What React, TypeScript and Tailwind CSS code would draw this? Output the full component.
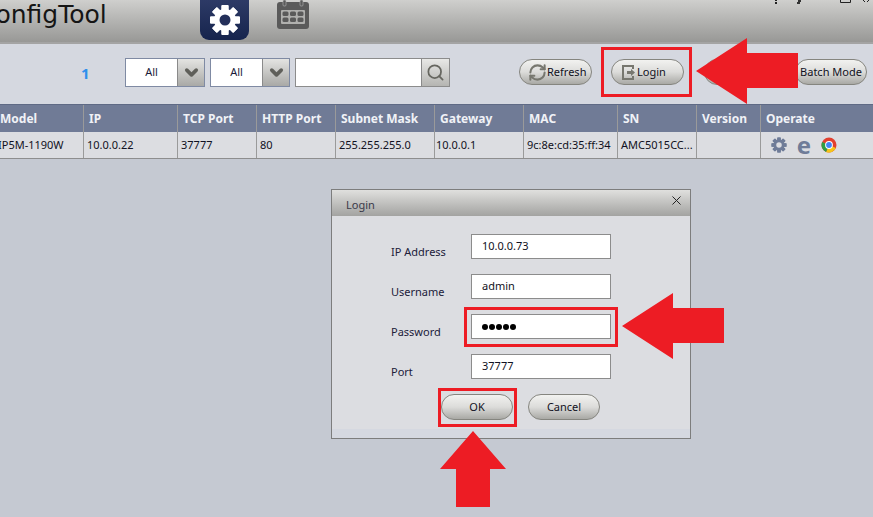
import { Search, ChevronDown, RefreshCw, X } from "lucide-react";

const columns = [
  { head: "Model", cell: "IP5M-1190W", w: "w-[84px]", hp: "pl-[0px]", cp: "pl-0 indent-[-2px]" },
  { head: "IP", cell: "10.0.0.22", w: "w-[94px]", hp: "pl-[5px]", cp: "pl-[3px]" },
  { head: "TCP Port", cell: "37777", w: "w-[79px]", hp: "pl-[5px]", cp: "pl-[3px]" },
  { head: "HTTP Port", cell: "80", w: "w-[79px]", hp: "pl-[5px]", cp: "pl-[3px]" },
  { head: "Subnet Mask", cell: "255.255.255.0", w: "w-[99px]", hp: "pl-[5px]", cp: "pl-[3px]" },
  { head: "Gateway", cell: "10.0.0.1", w: "w-[89px]", hp: "pl-[5px]", cp: "pl-[1px]" },
  { head: "MAC", cell: "9c:8e:cd:35:ff:34", w: "w-[94px]", hp: "pl-[5px]", cp: "pl-[3px]" },
  { head: "SN", cell: "AMC5015CC...", w: "w-[79px]", hp: "pl-[5px]", cp: "pl-[3px]" },
  { head: "Version", cell: "", w: "w-[64px]", hp: "pl-[5px]", cp: "pl-[3px]" },
];

function Gear({ size, color, hole }: { size: number; color: string; hole: string }) {
  const teeth = [0, 45, 90, 135, 180, 225, 270, 315];
  return (
    <svg width={size} height={size} viewBox="0 0 32 32">
      {teeth.map((a) => (
        <rect key={a} x="12.5" y="1" width="7" height="30" rx="1" fill={color} transform={`rotate(${a} 16 16)`} />
      ))}
      <circle cx="16" cy="16" r="11" fill={color} />
      <circle cx="16" cy="16" r="5.5" fill={hole} />
    </svg>
  );
}

function Combo({ label }: { label: string }) {
  return (
    <div className="flex h-[29px] w-[80px] border border-[#7f8aa3] bg-white">
      <div className="flex flex-1 items-center justify-center text-[11px] text-[#1a1a3a]">{label}</div>
      <div className="flex w-[27px] items-center justify-center border-l border-[#8a8a8a] bg-gradient-to-b from-[#e4e4e2] to-[#a9a9a6]">
        <ChevronDown size={19} strokeWidth={4.5} color="#5f5f5a" />
      </div>
    </div>
  );
}

function Pill({ children, className }: { children: React.ReactNode; className: string }) {
  return (
    <div
      className={`flex h-[26px] items-center rounded-[13px] border border-[#85857f] bg-gradient-to-b from-[#f2f2f0] via-[#dcdcda] to-[#a9a9a5] text-[11px] text-[#111122] ${className}`}
    >
      {children}
    </div>
  );
}

function Field({ label, value, dots }: { label: string; value: string; dots?: boolean }) {
  return (
    <div className="flex h-[25px] items-start">
      <div className="w-[80px] pt-[10px] text-[11px] leading-[16px] text-[#20203a]">{label}</div>
      <div className="flex h-[25px] w-[140px] items-center border border-[#8c8c8c] bg-white pl-[10px] text-[11px] text-[#111122]">
        {dots ? (
          <div className="flex gap-[1px]">
            {[0, 1, 2, 3, 4].map((i) => (
              <span key={i} className="h-[6px] w-[6px] rounded-full bg-black" />
            ))}
          </div>
        ) : (
          value
        )}
      </div>
    </div>
  );
}

function RedArrow({ className, dir }: { className: string; dir: "left" | "up" }) {
  if (dir === "left") {
    return (
      <svg className={`absolute ${className}`} width="102" height="66" viewBox="0 0 102 66">
        <polygon points="0,33 51,0 51,15 102,15 102,50 51,50 51,66" fill="#ed1c24" />
      </svg>
    );
  }
  return (
    <svg className={`absolute ${className}`} width="66" height="76" viewBox="0 0 66 76">
      <polygon points="33,0 66,38 50,38 50,76 16,76 16,38 0,38" fill="#ed1c24" />
    </svg>
  );
}

export default function App() {
  return (
    <div
      className="relative flex h-[517px] w-[873px] flex-col overflow-hidden bg-[#c5c9d2]"
      style={{ fontFamily: '"Noto Sans", "DejaVu Sans", sans-serif' }}
    >
      {/* title bar */}
      <div className="relative flex h-[44px] items-start border-b-2 border-[#a4a4a4] bg-gradient-to-b from-[#cfcfcd] to-[#989896]">
        <div
          className="ml-[-22px] mt-[-1px] w-[168px] whitespace-nowrap text-[25px] leading-[32px] text-[#151515]"
          style={{ fontFamily: '"DejaVu Sans", sans-serif' }}
        >
          ConfigTool
        </div>
        <div className="ml-[54px] flex h-[40px] w-[49px] items-center justify-center rounded-b-[9px] bg-gradient-to-b from-[#2d3a66] to-[#16244d]">
          <Gear size={32} color="#ffffff" hole="#24305a" />
        </div>
        <svg className="ml-[27px]" width="34" height="30" viewBox="0 0 34 30">
          <rect x="1" y="2" width="32" height="27" rx="3" fill="#5a5a5a" />
          <rect x="7" y="0" width="3" height="6" rx="1" fill="#5a5a5a" stroke="#b5b5b5" strokeWidth="0.6" />
          <rect x="24" y="0" width="3" height="6" rx="1" fill="#5a5a5a" stroke="#b5b5b5" strokeWidth="0.6" />
          <rect x="5" y="10" width="24" height="14" rx="1" fill="#b0b0ae" />
          {[0, 1, 2].map((c) =>
            [0, 1].map((r) => (
              <rect key={`${c}-${r}`} x={6.5 + c * 7.5} y={11.5 + r * 6} width="6" height="4.5" rx="1.5" fill="#5a5a5a" />
            )),
          )}
        </svg>
        {/* window controls, cropped by the top edge */}
        <svg className="absolute left-[760px] top-0" width="113" height="6" viewBox="0 0 113 6">
          <rect x="15" y="0" width="2" height="1" fill="#222222" />
          <rect x="15" y="2" width="2" height="2" fill="#222222" />
          <path d="M38 0h3v2h-1v2h-3v-2h1z" fill="#333333" />
          <path d="M80.5 0v2.5h10V0" fill="none" stroke="#222222" />
          <path d="M103 0l2 2M109 0l-2 2" stroke="#222222" />
        </svg>
      </div>

      {/* toolbar */}
      <div className="flex h-[60px] items-start bg-[#d5d8e0]">
        <div className="ml-[81px] mt-[19px] w-[44px] text-[15px] font-bold leading-[20px] text-[#2e8fec]">1</div>
        <div className="mt-[14px] flex gap-[5px]">
          <Combo label="All" />
          <Combo label="All" />
          <div className="flex h-[29px] w-[155px] border border-[#8c8c8c] bg-white">
            <div className="flex-1" />
            <div className="flex w-[28px] items-center justify-center border-l border-[#8a8a8a] bg-gradient-to-b from-[#e8e8e6] to-[#b5b5b2]">
              <Search size={19} strokeWidth={2.2} color="#66665f" />
            </div>
          </div>
        </div>
        <Pill className="ml-[69px] mt-[15px] w-[73px] pl-[8px]">
          <RefreshCw size={19} strokeWidth={2.6} color="#77776f" />
          <span>Refresh</span>
        </Pill>
        <Pill className="ml-[19px] mt-[15px] w-[73px] pl-[9px]">
          <svg width="16" height="17" viewBox="0 0 16 17" fill="none" stroke="#77776f" strokeWidth="2">
            <path d="M12 5V2H2v13h10v-3" />
            <path d="M6 8.5h6" strokeWidth="3" />
            <path d="M10 5l4 3.5-4 3.5z" fill="#77776f" strokeWidth="0" />
          </svg>
          <span>Login</span>
        </Pill>
        <Pill className="ml-[20px] mt-[15px] w-[30px]">
          <span />
        </Pill>
        <Pill className="ml-[61px] mt-[15px] w-[72px] shrink-0 justify-center whitespace-nowrap">Batch Mode</Pill>
      </div>

      {/* device table */}
      <div className="flex h-[28px] border-t border-[#5f6a85] bg-[#707b96]">
        {columns.map((c) => (
          <div
            key={c.head}
            className={`flex shrink-0 items-center border-r border-[#9a9a9a] text-[12px] font-bold text-[#f0f2f6] ${c.w} ${c.hp}`}
          >
            {c.head}
          </div>
        ))}
        <div className="flex flex-1 items-center pl-[5px] text-[12px] font-bold text-[#f0f2f6]">Operate</div>
      </div>
      <div className="flex h-[27px] border-b border-[#8e8e8e] bg-[#dcdde1]">
        {columns.map((c) => (
          <div
            key={c.head}
            className={`block shrink-0 overflow-hidden whitespace-nowrap border-r border-[#9a9a9a] text-[11px] leading-[26px] text-[#111122] ${c.w} ${c.cp}`}
          >
            {c.cell}
          </div>
        ))}
        <div className="flex flex-1 items-center gap-[9px] pl-[10px]">
          <Gear size={16} color="#6f7c98" hole="#dcdde1" />
          <span className="w-[16px] text-center text-[24px] font-bold leading-[22px] text-[#6f7c98]">e</span>
          <svg width="16" height="16" viewBox="0 0 16 16">
            <circle cx="8" cy="8" r="7.5" fill="#e2402f" />
            <path d="M8 8 L14.9 11 A7.5 7.5 0 0 1 5 14.9 Z" fill="#f5c518" />
            <path d="M8 8 L5 14.9 A7.5 7.5 0 0 1 1.1 5 Z" fill="#2f9e44" />
            <circle cx="8" cy="8" r="3.9" fill="#ffffff" />
            <circle cx="8" cy="8" r="2.9" fill="#4285f4" />
          </svg>
        </div>
      </div>

      {/* login dialog */}
      <div className="absolute left-[331px] top-[189px] flex h-[250px] w-[360px] flex-col border border-[#7d7d7d] bg-[#dcdde1]">
        <div className="flex h-[26px] items-start justify-between bg-gradient-to-b from-[#e0e0de] to-[#a3a3a1] pl-[14px] pr-[6px] text-[11px] text-[#3a3a4a]">
          <span className="pt-[7px] leading-[16px]">Login</span>
          <X size={15} strokeWidth={1.6} color="#222222" className="mt-[3px]" />
        </div>
        <div className="flex flex-col gap-[15px] pl-[59px] pt-[18px]">
          <Field label="IP Address" value="10.0.0.73" />
          <Field label="Username" value="admin" />
          <Field label="Password" value="" dots />
          <Field label="Port" value="37777" />
        </div>
        <div className="mt-[15px] flex gap-[15px] pl-[109px]">
          <Pill className="w-[72px] justify-center">OK</Pill>
          <Pill className="w-[72px] justify-center">Cancel</Pill>
        </div>
        <div className="mt-auto h-[9px] bg-[#d5d8e0]" />
      </div>

      {/* red annotations */}
      <div className="absolute left-[601px] top-[47px] h-[50px] w-[91px] border-[3px] border-[#ed1c24]" />
      <div className="absolute left-[464px] top-[307px] h-[40px] w-[154px] border-[3px] border-[#ed1c24]" />
      <div className="absolute left-[438px] top-[388px] h-[39px] w-[79px] border-[3px] border-[#ed1c24]" />
      <RedArrow dir="left" className="left-[696px] top-[38px]" />
      <RedArrow dir="left" className="left-[622px] top-[293px]" />
      <RedArrow dir="up" className="left-[440px] top-[431px]" />
    </div>
  );
}
